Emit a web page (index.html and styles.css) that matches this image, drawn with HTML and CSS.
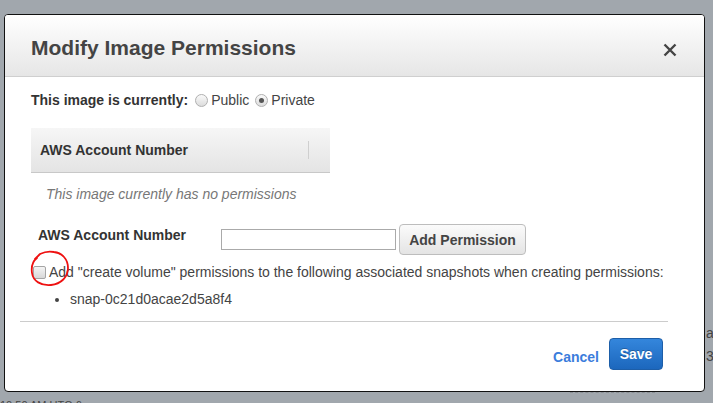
FILE: index.html
```html
<!DOCTYPE html>
<html>
<head>
<meta charset="utf-8">
<link rel="stylesheet" href="styles.css">
</head>
<body>
<div class="backdrop">
  <div class="bg-line bg-line-1"></div>
  <div class="bg-line bg-line-2"></div>
  <div class="bg-side">a<br>3a</div>
  <div class="bg-dash"></div>
  <div class="bg-bottom">10:50 AM UTC-6</div>
</div>
<div class="modal">
  <div class="modal-header">
    <h1 class="modal-title">Modify Image Permissions</h1>
    <button class="close" aria-label="Close">
      <svg width="14" height="14" viewBox="0 0 14 14"><path d="M1.5 1.5 L12.5 12.5 M12.5 1.5 L1.5 12.5" stroke="#444" stroke-width="2.4" fill="none"/></svg>
    </button>
  </div>
  <div class="modal-body">
    <div class="status-row">
      <span class="strong">This image is currently:</span>
      <label class="radio-label"><input type="radio" name="vis" class="radio">Public</label>
      <label class="radio-label"><input type="radio" name="vis" class="radio" checked>Private</label>
    </div>
    <div class="table">
      <div class="table-head">
        <span class="strong">AWS Account Number</span>
        <span class="col-divider"></span>
      </div>
    </div>
    <div class="empty">This image currently has no permissions</div>
    <div class="form-row">
      <span class="strong form-label">AWS Account Number</span>
      <input class="text-input" type="text">
      <button class="btn">Add Permission</button>
    </div>
    <div class="check-row">
      <span class="check-wrap">
        <input type="checkbox" class="checkbox">
        <svg class="scribble" width="46" height="42" viewBox="0 0 46 42"><path d="M7 10 L12 5 C16 3 21 2 26 3 C34 4 40 10 40 19 C40 28 33 35 23 36 C13 37 5 32 4 24 C3 17 5 12 9 9" stroke="#ee1111" stroke-width="1.8" fill="none" stroke-linecap="round" stroke-linejoin="round"/></svg>
      </span>
      <span class="check-text">Add "create volume" permissions to the following associated snapshots when creating permissions:</span>
    </div>
    <ul class="snap-list">
      <li>snap-0c21d0acae2d5a8f4</li>
    </ul>
    <div class="divider"></div>
    <div class="footer">
      <a class="cancel" href="#">Cancel</a>
      <button class="btn-primary">Save</button>
    </div>
  </div>
</div>
</body>
</html>
```
FILE: styles.css
```css
html, body {
  margin: 0;
  padding: 0;
}
body {
  width: 713px;
  height: 403px;
  overflow: hidden;
  background: #a1a7ad;
  font-family: "Liberation Sans", Arial, sans-serif;
  font-size: 14px;
  color: #444;
  position: relative;
}
.backdrop {
  height: 403px;
  display: flex;
  flex-direction: column;
}
.bg-line {
  height: 1px;
  background: #b4b8bc;
}
.bg-line-1 { margin-top: 199px; }
.bg-line-2 { margin-top: 83px; }
.bg-side {
  margin-top: 40px;
  margin-left: 706px;
  line-height: 23px;
  font-size: 14px;
  color: #444;
}
.bg-dash {
  margin-top: 24px;
  margin-left: 570px;
  width: 85px;
  height: 0;
  border-top: 1px dashed #8a8f94;
}
.bg-bottom {
  margin-top: 6px;
  font-size: 11px;
  color: #444;
  flex-shrink: 0;
}
.modal {
  position: absolute;
  left: 4px;
  top: 14px;
  width: 699px;
  height: 376px;
  border: 1px solid #111;
  border-radius: 4px;
  background: #fff;
  display: flex;
  flex-direction: column;
  overflow: hidden;
}
.modal-header {
  height: 61px;
  border-bottom: 1px solid #cfcfcf;
  background: linear-gradient(#ffffff, #e6e6e6);
  display: flex;
  align-items: center;
  justify-content: space-between;
  padding: 0 26px 0 26px;
  flex-shrink: 0;
}
.modal-title {
  margin: 0;
  font-size: 21px;
  font-weight: bold;
  color: #444;
  padding-top: 4px;
}
.close {
  border: 0;
  background: transparent;
  padding: 0;
  margin-top: 9px;
  margin-right: 1px;
  width: 14px;
  height: 14px;
  display: flex;
}
.modal-body {
  padding: 13px 0 0 26px;
  display: flex;
  flex-direction: column;
}
.strong {
  font-weight: bold;
  font-size: 14px;
  color: #333;
}
.status-row {
  display: flex;
  align-items: center;
  height: 20px;
}
.radio-label {
  display: flex;
  align-items: center;
  color: #444;
  font-size: 14px;
}
.radio {
  appearance: none;
  -webkit-appearance: none;
  width: 13px;
  height: 13px;
  margin: 0 3px 0 7px;
  border: 1px solid #b0b0b0;
  border-radius: 50%;
  background: linear-gradient(#fafafa, #dcdcdc);
  position: relative;
  box-sizing: border-box;
}
.radio:checked::after {
  content: "";
  position: absolute;
  left: 3px;
  top: 3px;
  width: 5px;
  height: 5px;
  border-radius: 50%;
  background: #555;
}
.radio-label + .radio-label .radio {
  margin-left: 6px;
}
.table {
  margin-top: 18px;
  width: 299px;
}
.table-head {
  height: 44px;
  border-bottom: 1px solid #c8c8c8;
  background: linear-gradient(#f6f6f6, #e4e4e4);
  display: flex;
  align-items: center;
  justify-content: space-between;
  padding: 0 21px 0 9px;
}
.col-divider {
  width: 1px;
  height: 18px;
  background: #cfcfcf;
}
.empty {
  margin-top: 11px;
  margin-left: 15px;
  line-height: 20px;
  font-style: italic;
  color: #777;
  font-size: 14px;
}
.form-row {
  margin-top: 20px;
  display: flex;
  align-items: center;
  height: 31px;
}
.form-label {
  width: 183px;
  padding-left: 7px;
  margin-top: -10px;
}
.text-input {
  width: 173px;
  height: 19px;
  padding: 0;
  margin: 0;
  border: 1px solid #aaa;
  box-sizing: content-box;
}
.btn {
  margin-left: 3px;
  width: 127px;
  height: 31px;
  border: 1px solid #bdbdbd;
  border-radius: 4px;
  background: linear-gradient(#fbfbfb, #e4e4e4);
  font-family: inherit;
  font-weight: bold;
  font-size: 14px;
  color: #444;
  padding: 0;
}
.check-row {
  margin-top: 10px;
  display: flex;
  align-items: center;
  height: 14px;
}
.check-wrap {
  position: relative;
  display: flex;
}
.checkbox {
  appearance: none;
  -webkit-appearance: none;
  width: 13px;
  height: 13px;
  margin: 0 3px 0 2px;
  border: 1px solid #a5a5a5;
  border-radius: 2px;
  background: linear-gradient(#f4f4f4, #d8d8d8);
  box-sizing: border-box;
}
.scribble {
  position: absolute;
  left: -3px;
  top: -17px;
}
.check-text {
  color: #444;
  font-size: 14px;
}
.snap-list {
  margin: 11px 0 0 0;
  padding: 0 0 0 39px;
  font-size: 14px;
  color: #444;
  line-height: 18px;
}
.divider {
  margin: 13px 36px 0 -11px;
  height: 1px;
  background: #ccc;
}
.footer {
  margin-top: 16px;
  display: flex;
  justify-content: flex-end;
  align-items: center;
  padding-right: 41px;
}
.cancel {
  color: #3b7ddc;
  font-weight: bold;
  font-size: 14px;
  text-decoration: none;
  margin-right: 10px;
  margin-top: 6px;
}
.btn-primary {
  width: 54px;
  height: 32px;
  border: 1px solid #1d5ea8;
  border-radius: 4px;
  background: linear-gradient(#3486dc, #1c67bd);
  color: #fff;
  font-family: inherit;
  font-weight: bold;
  font-size: 14px;
  padding: 0;
  text-shadow: 0 -1px 0 rgba(0,0,0,0.25);
}
```
